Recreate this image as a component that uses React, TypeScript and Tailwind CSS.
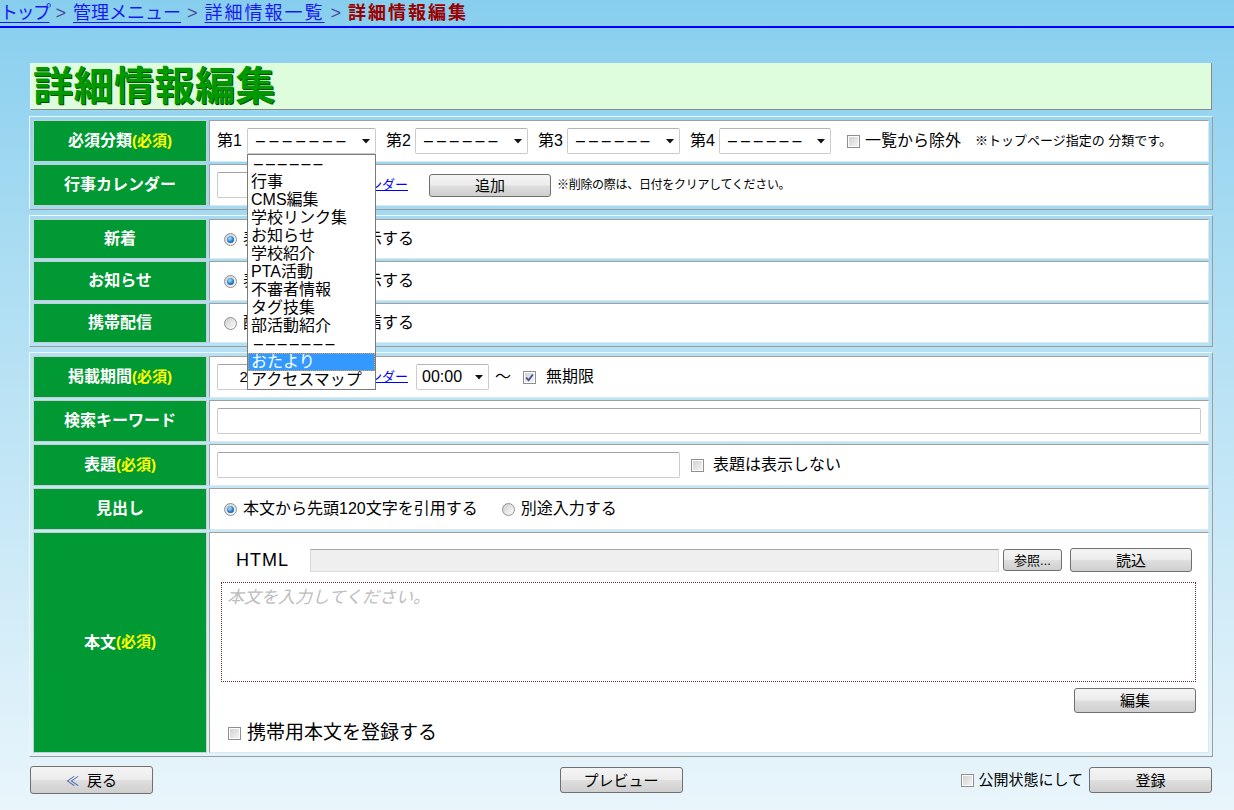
import React from "react";

const btnBase =
  "flex items-center justify-center shrink-0 border border-[#707070] rounded-[3px] bg-[linear-gradient(to_bottom,#f4f4f4_0%,#ececec_48%,#dedede_52%,#cfcfcf_100%)] text-black leading-none";

function Btn({ children, className = "" }: { children: React.ReactNode; className?: string }) {
  return <div className={btnBase + " " + className}>{children}</div>;
}

function Check({ checked = false, className = "" }: { checked?: boolean; className?: string }) {
  return (
    <span
      className={
        "relative inline-block shrink-0 w-[13px] h-[13px] border border-[#8f8f8f] bg-[linear-gradient(135deg,#cfcfcf,#f6f6f6)] shadow-[inset_0_0_0_1px_#ffffff] " +
        className
      }
    >
      {checked && (
        <svg className="absolute left-[1px] top-[1px]" width="9" height="9" viewBox="0 0 9 9">
          <path d="M1.2 4.6 L3.6 7.2 L7.8 1.4" stroke="#3b4f8f" strokeWidth="1.7" fill="none" />
        </svg>
      )}
    </span>
  );
}

function Radio({ checked = false, className = "" }: { checked?: boolean; className?: string }) {
  return (
    <span
      className={
        "inline-flex shrink-0 items-center justify-center w-[13px] h-[13px] rounded-full border border-[#8f8f8f] bg-[linear-gradient(135deg,#cdcdcd,#ffffff)] " +
        className
      }
    >
      {checked && (
        <span className="w-[7px] h-[7px] rounded-full bg-[radial-gradient(circle_at_40%_35%,#b0e4ff,#1b74c4_60%,#0a3d74)]" />
      )}
    </span>
  );
}

function Arrow() {
  return (
    <svg width="8" height="5" viewBox="0 0 8 5" className="shrink-0">
      <path d="M0 0 H8 L4 4.5 Z" fill="#111" />
    </svg>
  );
}

function Dashes({ n, className = "" }: { n: number; className?: string }) {
  return (
    <span className={"font-['Liberation_Sans',sans-serif] text-[16px] whitespace-nowrap " + className}>
      {"–".repeat(n)}
    </span>
  );
}

const inputCls = "h-[26px] bg-white border border-[#cccccc] border-t-[#a5a5a5] rounded-[2px] shrink-0";
const selCls =
  "relative flex items-center justify-between h-[26px] bg-white border border-[#cccccc] border-t-[#b5b5b5] rounded-[2px] pl-[8px] pr-[5px] shrink-0 text-[13px]";

function Label({ children }: { children: React.ReactNode }) {
  return (
    <div className="w-[174px] shrink-0 bg-[#009933] border border-[#c6cfcf] flex items-center justify-center text-white font-bold text-[16px]">
      {children}
    </div>
  );
}

function Req() {
  return <span className="text-[#ffff00] text-[15px]">(必須)</span>;
}

const contentCls =
  "flex-1 bg-white border border-t-[#a0a0a0] border-l-[#a0a0a0] border-r-[#dbe9f0] border-b-[#dbe9f0] flex items-center pl-[7px] text-[16px] text-black";

const sectionCls =
  "ml-[29px] w-[1184px] border border-t-[#eef7fc] border-l-[#eef7fc] border-b-[#9c9c9c] border-r-[#9c9c9c] p-[3px] flex flex-col gap-[2px]";

const dropdownItems = [
  "行事",
  "CMS編集",
  "学校リンク集",
  "お知らせ",
  "学校紹介",
  "PTA活動",
  "不審者情報",
  "タグ技集",
  "部活動紹介",
];

export default function App() {
  return (
    <div className="min-h-[810px] w-[1234px] bg-[linear-gradient(to_bottom,#87ceee_0%,#a9dcf2_30%,#e9f5fb_100%)] font-['Liberation_Sans','Noto_Sans_CJK_JP',sans-serif] text-black">
      {/* breadcrumb */}
      <div className="h-[26px] flex items-center text-[18px] leading-[26px] tracking-[1px] whitespace-nowrap">
        <span className="text-[#1a1aee] underline underline-offset-[3px] tracking-[-1.5px]">トップ</span>
        <span className="text-[#4a4a9a]">&nbsp;&gt;&nbsp;</span>
        <span className="text-[#1a1aee] underline underline-offset-[3px] tracking-[0px]">管理メニュー</span>
        <span className="text-[#4a4a9a]">&nbsp;&gt;&nbsp;</span>
        <span className="text-[#1a1aee] underline underline-offset-[3px] tracking-[2px]">詳細情報一覧</span>
        <span className="text-[#4a4a9a]">&nbsp;&gt;&nbsp;</span>
        <span className="text-[#9a0000] font-bold tracking-[2px]">詳細情報編集</span>
      </div>
      <div className="h-[2px] bg-[#0000ff]" />

      {/* title */}
      <div className="mt-[35px] ml-[30px] w-[1182px] h-[47px] bg-[#ddfddd] border-b border-r border-[#8a8a8a] border-l border-l-[#eef7fc] flex items-center pl-[2px]">
        <span className="text-[40px] leading-[47px] tracking-[0.5px] font-bold text-[#009a00] [text-shadow:1px_1px_0_#005000]">
          詳細情報編集
        </span>
      </div>

      {/* section 1 */}
      <div className={sectionCls + " mt-[6px]"}>
        <div className="flex gap-[2px] h-[42px]">
          <Label>
            必須分類<Req />
          </Label>
          <div className={contentCls}>
            <span className="w-[30px] shrink-0">第1</span>
            <div className={selCls + " w-[129px] z-20"}>
              <Dashes n={7} className="tracking-[4.5px]" />
              <Arrow />
              <div className="absolute left-[-1px] top-[25px] w-[129px] bg-white border border-[#7a7a7a] text-[16px] leading-[18px] tracking-normal z-30">
                <div className="h-[18px] pl-[6px] flex items-center">
                  <Dashes n={6} className="tracking-[3px]" />
                </div>
                {dropdownItems.map((t) => (
                  <div key={t} className="h-[18px] pl-[3px] whitespace-nowrap">
                    {t}
                  </div>
                ))}
                <div className="h-[18px] pl-[6px] flex items-center">
                  <Dashes n={7} className="tracking-[3px]" />
                </div>
                <div className="h-[18px] pl-[3px] bg-[#3399ff] text-white outline-1 outline-dotted outline-[#e8a040] -outline-offset-1">
                  おたより
                </div>
                <div className="h-[18px] pl-[3px] whitespace-nowrap">アクセスマップ</div>
              </div>
            </div>
            <span className="ml-[10px] w-[29px] shrink-0">第2</span>
            <div className={selCls + " w-[113px]"}>
              <Dashes n={6} className="tracking-[4px]" />
              <Arrow />
            </div>
            <span className="ml-[10px] w-[29px] shrink-0">第3</span>
            <div className={selCls + " w-[113px]"}>
              <Dashes n={6} className="tracking-[4px]" />
              <Arrow />
            </div>
            <span className="ml-[10px] w-[29px] shrink-0">第4</span>
            <div className={selCls + " w-[112px]"}>
              <Dashes n={6} className="tracking-[4px]" />
              <Arrow />
            </div>
            <Check className="ml-[16px]" />
            <span className="ml-[5px]">一覧から除外</span>
            <span className="ml-[14px] text-[13px]">※トップページ指定の 分類です。</span>
          </div>
        </div>
        <div className="flex gap-[2px] h-[42px]">
          <Label>行事カレンダー</Label>
          <div className={contentCls}>
            <div className={inputCls + " w-[120px]"} />
            <span className="ml-[6px] text-[13px] text-[#0000ff] underline">カレンダー</span>
            <Btn className="ml-[21px] w-[122px] h-[23px] text-[15px]">追加</Btn>
            <span className="ml-[6px] text-[12px] tracking-[-0.3px]">※削除の際は、日付をクリアしてください。</span>
          </div>
        </div>
      </div>

      {/* section 2 */}
      <div className={sectionCls + " mt-[5px]"}>
        <div className="flex gap-[2px] h-[40px]">
          <Label>新着</Label>
          <div className={contentCls}>
            <Radio checked className="ml-[7px]" />
            <span className="ml-[6px] w-[88px]">表示しない</span>
            <Radio />
            <span className="ml-[6px]">表示する</span>
          </div>
        </div>
        <div className="flex gap-[2px] h-[40px]">
          <Label>お知らせ</Label>
          <div className={contentCls}>
            <Radio checked className="ml-[7px]" />
            <span className="ml-[6px] w-[88px]">表示しない</span>
            <Radio />
            <span className="ml-[6px]">表示する</span>
          </div>
        </div>
        <div className="flex gap-[2px] h-[40px]">
          <Label>携帯配信</Label>
          <div className={contentCls}>
            <Radio className="ml-[7px]" />
            <span className="ml-[6px] w-[88px]">配信しない</span>
            <Radio />
            <span className="ml-[6px]">配信する</span>
          </div>
        </div>
      </div>

      {/* section 3 */}
      <div className={sectionCls + " mt-[5px]"}>
        <div className="flex gap-[2px] h-[42px]">
          <Label>
            掲載期間<Req />
          </Label>
          <div className={contentCls}>
            <div className={inputCls + " w-[120px] flex items-center justify-center text-[15px]"}>2014/04/01</div>
            <span className="ml-[6px] text-[13px] text-[#0000ff] underline">カレンダー</span>
            <div className={selCls + " ml-[8px] w-[73px] !text-[16px] !pl-[5px]"}>
              <span>00:00</span>
              <Arrow />
            </div>
            <span className="ml-[6px]">～</span>
            <Check checked className="ml-[12px]" />
            <span className="ml-[10px]">無期限</span>
          </div>
        </div>
        <div className="flex gap-[2px] h-[42px]">
          <Label>検索キーワード</Label>
          <div className={contentCls + " pr-[7px]"}>
            <div className={inputCls + " flex-1"} />
          </div>
        </div>
        <div className="flex gap-[2px] h-[42px]">
          <Label>
            表題<Req />
          </Label>
          <div className={contentCls}>
            <div className={inputCls + " w-[463px]"} />
            <Check className="ml-[11px]" />
            <span className="ml-[9px]">表題は表示しない</span>
          </div>
        </div>
        <div className="flex gap-[2px] h-[42px]">
          <Label>見出し</Label>
          <div className={contentCls}>
            <Radio checked className="ml-[7px]" />
            <span className="ml-[6px]">本文から先頭120文字を引用する</span>
            <Radio className="ml-[24px]" />
            <span className="ml-[6px]">別途入力する</span>
          </div>
        </div>
        <div className="flex gap-[2px] h-[221px]">
          <Label>
            本文<Req />
          </Label>
          <div className="flex-1 bg-white border border-t-[#a0a0a0] border-l-[#a0a0a0] border-r-[#dbe9f0] border-b-[#dbe9f0] flex flex-col pl-[11px] pt-[15px] text-black">
            <div className="flex items-center h-[24px]">
              <span className="ml-[15px] w-[74px] text-[18px] tracking-[1px] font-['Liberation_Sans',sans-serif]">HTML</span>
              <div className="w-[689px] h-[23px] bg-[#efefef] border border-[#dadada] border-t-[#a8a8a8]" />
              <Btn className="ml-[4px] w-[59px] h-[22px] text-[13px]">参照...</Btn>
              <Btn className="ml-[8px] w-[122px] h-[24px] text-[15px]">読込</Btn>
            </div>
            <div className="mt-[10px] w-[975px] h-[100px] border border-dotted border-[#6b2b2b] pl-[5px] pt-[5px] text-[17px] leading-[20px] italic text-[#bdbdbd]">
              本文を入力してください。
            </div>
            <div className="w-[975px] flex justify-end">
              <Btn className="mt-[6px] w-[122px] h-[25px] text-[15px]">編集</Btn>
            </div>
            <div className="mt-[10px] h-[20px] flex items-center ml-[7px]">
              <Check />
              <span className="ml-[6px] text-[19px]">携帯用本文を登録する</span>
            </div>
          </div>
        </div>
      </div>

      {/* footer */}
      <div className="mt-[9px] ml-[30px] w-[1182px] grid grid-cols-[1fr_auto_1fr] items-center">
        <div className="flex">
          <Btn className="w-[123px] h-[28px] text-[15px] gap-[8px]">
            <span className="text-[#3a5aa8] text-[13px]">≪</span>
            <span>戻る</span>
          </Btn>
        </div>
        <Btn className="w-[123px] h-[26px] text-[15px]">プレビュー</Btn>
        <div className="flex items-center justify-end">
          <Check />
          <span className="ml-[4px] text-[15px]">公開状態にして</span>
          <Btn className="ml-[6px] w-[123px] h-[26px] text-[15px]">登録</Btn>
        </div>
      </div>
    </div>
  );
}
